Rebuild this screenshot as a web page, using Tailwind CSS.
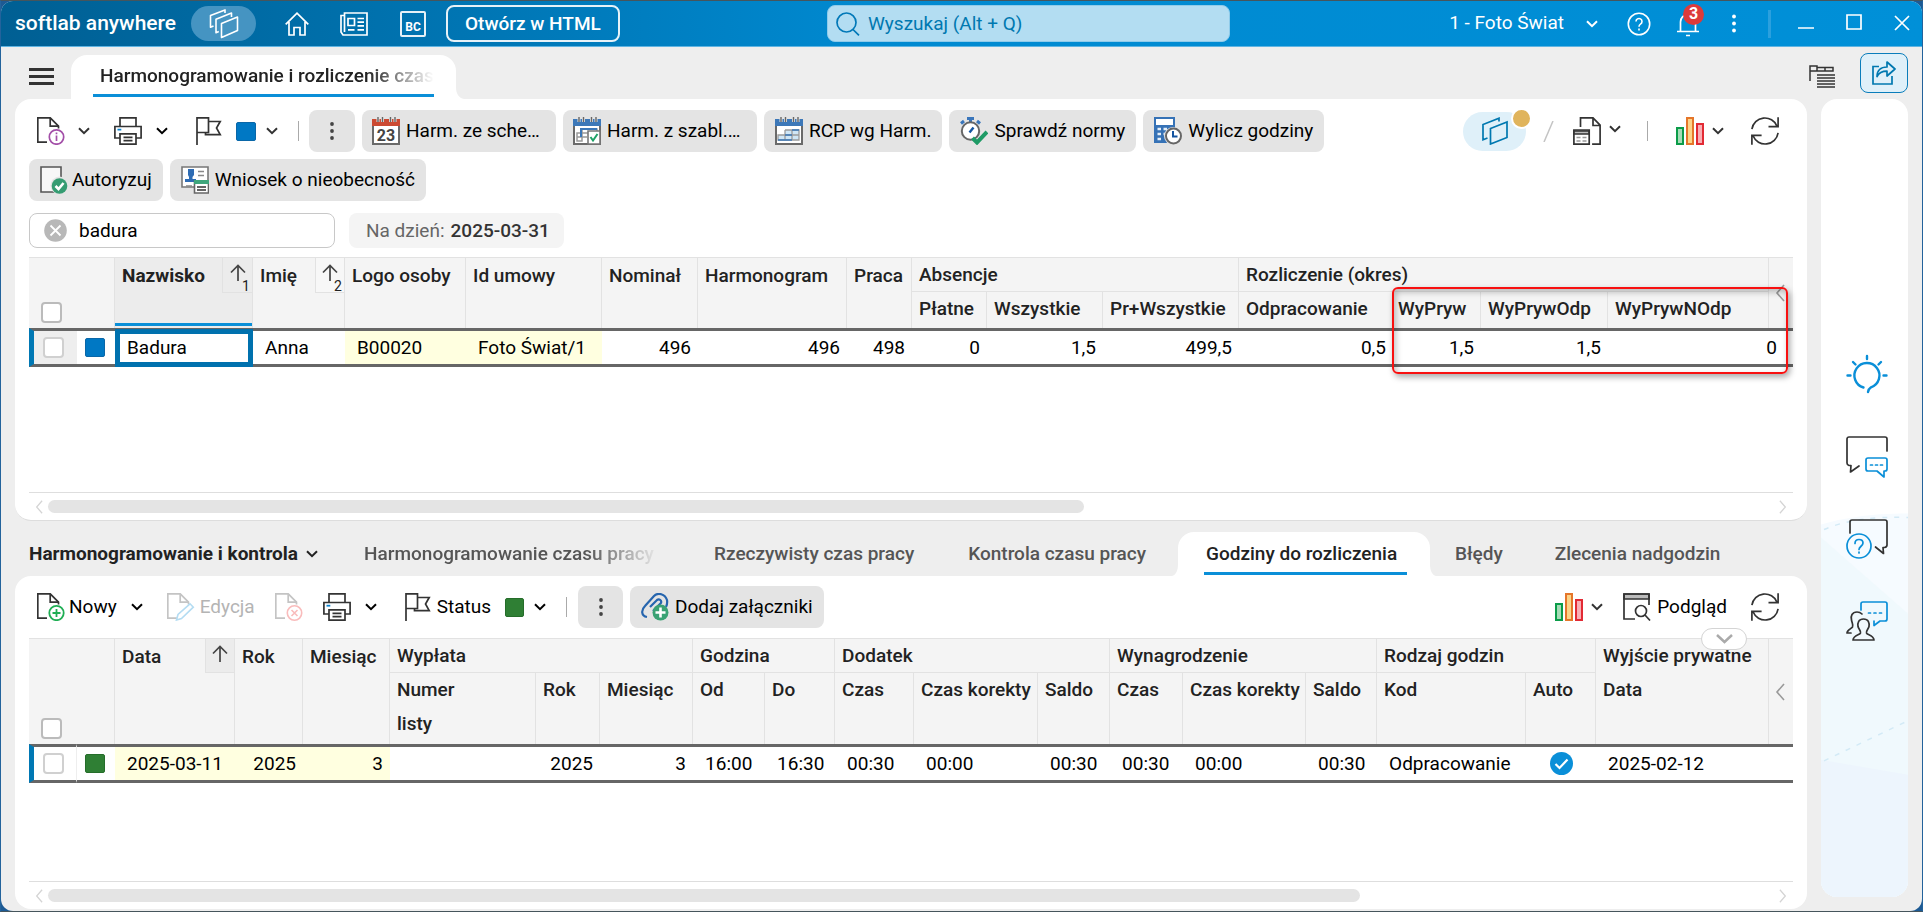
<!DOCTYPE html>
<html lang="pl">
<head>
    <meta charset="UTF-8">
    <meta name="viewport" content="width=device-width, initial-scale=1.0">
    <title>softlab anywhere - Harmonogramowanie</title>
    <script src="https://cdn.jsdelivr.net/npm/@tailwindcss/browser@4"></script>
</head>
<body class="bg-[#1d5a94] font-[Roboto,'Liberation_Sans',sans-serif] text-[19px] leading-6 text-black">

    <!-- Ikony -->
    <svg class="hidden">
        <symbol id="chev" viewBox="0 0 12 8"><path d="M1 1.2l5 5 5-5" fill="none" stroke="currentColor" stroke-width="2"/></symbol>
        <symbol id="left" viewBox="0 0 10 18"><path d="M9 1L2 9l7 8" fill="none" stroke="currentColor" stroke-width="1.6"/></symbol>
        <symbol id="right" viewBox="0 0 10 18"><path d="M1 1l7 8-7 8" fill="none" stroke="currentColor" stroke-width="1.6"/></symbol>
        <symbol id="sort" viewBox="0 0 16 18"><path d="M8 17V2M1 8.500L8 1.500l7 7" fill="none" stroke="#444" stroke-width="1.7"/></symbol>
        <symbol id="dots" viewBox="0 0 4 18"><g fill="currentColor"><circle cx="2" cy="2" r="1.900"/><circle cx="2" cy="9" r="1.900"/><circle cx="2" cy="16" r="1.900"/></g></symbol>
        <symbol id="doc" viewBox="0 0 28 28"><g fill="none" stroke="currentColor" stroke-width="1.7"><path d="M10 25.200H.8V.8h12.400l8.300 8.300v2.400"/><path d="M13.200 1v8.100h8.300"/></g></symbol>
        <symbol id="info" viewBox="0 0 28 28"><g fill="none" stroke="#a34fa8" stroke-width="1.7"><circle cx="19.500" cy="20" r="7.200"/><path d="M19.500 18.500v5.500M19.500 15.500v1.800"/></g></symbol>
        <symbol id="plus" viewBox="0 0 28 28"><g fill="none" stroke="#1fae54" stroke-width="1.8"><circle cx="19.500" cy="20" r="7.200"/><path d="M19.500 16v8M15.500 20h8"/></g></symbol>
        <symbol id="cross" viewBox="0 0 28 28"><g fill="none" stroke="#f9bcbc" stroke-width="1.6"><circle cx="19.500" cy="20" r="7.200"/><path d="M16.500 17l6 6M22.500 17l-6 6"/></g></symbol>
        <symbol id="pencil" viewBox="0 0 28 28"><path d="M9.500 27l1.500-5.500L23 10.800l3.300 3.400L14.500 25.500z" fill="#fff" stroke="#b4dcf2" stroke-width="1.6"/></symbol>
        <symbol id="print" viewBox="0 0 28 28"><g fill="none" stroke="#333" stroke-width="1.7"><path d="M6 9V.9h16V9M6 21H.9V9.500h26.200V21H22"/><path d="M6 16.800h16v10.300H6zM9.500 20.300h9M9.500 23.700h9"/></g><path d="M3.500 12.700h3.800" stroke="#0a84d0" stroke-width="1.8"/></symbol>
        <symbol id="flag" viewBox="0 0 26 28"><g fill="none" stroke="#333" stroke-width="1.7"><path d="M1 28V.9h11.500V15.500H1M12.500 4.500H24.200L20.500 11l3.700 6.600H9.500v-2"/></g></symbol>
        <symbol id="bars" viewBox="0 0 28 28"><path d="M1 11h6v16H1z" fill="#a6dcb6" stroke="#0b9c49" stroke-width="2"/><path d="M11 1h6v26h-6z" fill="#fcd488" stroke="#e5762a" stroke-width="2"/><path d="M21 7h6v20h-6z" fill="#f8aeb4" stroke="#e22a34" stroke-width="2"/></symbol>
        <symbol id="refresh" viewBox="0 0 28 28"><g fill="none" stroke="#333" stroke-width="1.7"><path d="M.9 12.200A13.100 13.100 0 0 1 26 9.200M27.100.3v9.300H17.500"/><path d="M27.100 15.800A13.100 13.100 0 0 1 2 18.800M.9 27.700v-9.300h9.700"/></g></symbol>
        <symbol id="calbase" viewBox="0 0 28 28"><path d="M1 9v18h26V9" fill="#fff" stroke="#6a6a6a" stroke-width="2"/><path d="M0 2h28v7H0z" fill="currentColor"/><path d="M6 0v5M10.500 0v5M18.500 0v5M23 0v5" stroke="#e4e4e4" stroke-width="3"/><path d="M6 0v5M10.500 0v5M18.500 0v5M23 0v5" stroke="#666" stroke-width="1.400"/></symbol>
    </svg>

    <div class="flex min-h-screen flex-col border border-[#23639c] border-t-[#46555c] border-b-[#46555c]">
    <div class="flex flex-1 flex-col overflow-hidden rounded-xl bg-[#eeeeee]">

        <!-- Pasek aplikacji -->
        <header class="flex h-[46px] items-center border-b border-[#5fb4e2] bg-linear-to-r from-[#005f93] via-[#0089d0] via-45% to-[#0090d8] pl-3.5 pr-3 text-white">
            <div class="w-44 pb-0.5 text-[21px] font-medium">softlab anywhere</div>
            <button aria-label="Moduły" class="flex h-[35px] w-[65px] items-center justify-center rounded-full bg-[#4594c2]">
                <svg class="h-[30px] w-[30px]" viewBox="0 0 30 30" fill="none" stroke="#fff" stroke-width="1.600" stroke-linejoin="round"><path d="M12.500 14.500L28.500 8v13.500L12.500 28.500z"/><path d="M9.800 22.500L7 23.700V10.300L22.500 4v4"/><path d="M4.500 17L1.500 18.200V6.500L16 .9v3"/></svg>
            </button>
            <button aria-label="Start" class="ml-[29px]"><svg class="h-6 w-6" viewBox="0 0 24 24" fill="none" stroke="#fff" stroke-width="1.700"><path d="M.7 12.300L12 1.200l11.300 11.100M4 10v13h5v-7.500h6V23h5V10"/></svg></button>
            <button aria-label="Aktualności" class="ml-[31px]"><svg class="h-6 w-7" viewBox="0 0 28 24" fill="none" stroke="#fff" stroke-width="1.700"><path d="M4.500 3.500H1V20l2 3h24V1H4.500v19"/><path d="M8 6.500h6.500v7H8zM17.500 6.500h6.500M17.500 10.200h6.500M17.500 13.900h6.500M8 17.800h6.500M17.500 17.800h6.500"/></svg></button>
            <button aria-label="BC" class="ml-8 flex h-[26px] w-[26px] items-end justify-center rounded-xs border-2 border-white/90 text-[12px] leading-4 font-bold">BC</button>
            <button class="ml-5 h-[37px] rounded-lg border-2 border-white/90 px-[17px] font-medium">Otwórz w HTML</button>
            <div class="flex-1"></div>
            <label class="mr-3 flex h-[37px] w-[403px] items-center rounded-lg border border-[#8fcbea] bg-[#b3ddf2] pl-2">
                <svg class="h-6 w-6 shrink-0" viewBox="0 0 24 24" fill="none" stroke="#0078b8" stroke-width="1.700"><circle cx="10.500" cy="10.500" r="9.500"/><path d="M17 17.500l6 5.800"/></svg>
                <input type="text" aria-label="Wyszukaj" placeholder="Wyszukaj (Alt + Q)" class="ml-2 w-full outline-none placeholder:text-[#0078b0]">
            </label>
            <div class="flex-1"></div>
            <button class="flex items-center gap-[22px] pb-0.5">1 - Foto Świat <svg class="mt-0.5 h-2 w-3"><use href="#chev"/></svg></button>
            <button aria-label="Pomoc" class="ml-[29px]"><svg class="h-6 w-6" viewBox="0 0 24 24" fill="none" stroke="#fff" stroke-width="1.600"><circle cx="12" cy="12" r="10.700"/><path d="M9 9.500a3 3 0 1 1 4.500 2.600c-1.100.7-1.500 1.200-1.500 2.600M12 16.500v2"/></svg></button>
            <button aria-label="Powiadomienia" class="relative ml-[25px]">
                <svg class="h-7 w-6" viewBox="0 0 24 28" fill="none" stroke="#fff" stroke-width="1.700"><path d="M1 21.500h22M4.500 21V12a7.500 7.500 0 0 1 15 0v9M10 25.500h4"/></svg>
                <span class="absolute -top-1.5 left-[7px] flex h-[21px] w-[21px] items-center justify-center rounded-full bg-[#dc3b3b] text-[16px] font-bold">3</span>
            </button>
            <button aria-label="Więcej" class="ml-8"><svg class="h-[19px] w-1"><use href="#dots"/></svg></button>
            <div class="ml-8 h-7 w-[3px] bg-[#2ba0de]"></div>
            <button aria-label="Minimalizuj" class="ml-[27px]"><svg class="h-4 w-4" viewBox="0 0 16 16"><path d="M0 12h16" stroke="#fff" stroke-width="1.700"/></svg></button>
            <button aria-label="Maksymalizuj" class="mb-1 ml-8"><svg class="h-4 w-4" viewBox="0 0 16 16"><path d="M1 1h14v14H1z" fill="none" stroke="#fff" stroke-width="1.700"/></svg></button>
            <button aria-label="Zamknij" class="mb-0.5 ml-8"><svg class="h-4 w-4" viewBox="0 0 16 16"><path d="M1 1l14 14M15 1L1 15" stroke="#fff" stroke-width="1.700"/></svg></button>
        </header>

        <!-- Zakładki główne -->
        <div class="flex h-[52px] shrink-0 items-end pr-3.5 pl-7">
            <button aria-label="Menu" class="mb-[14px] h-[17px] w-[25px] border-y-[3px] border-[#333] py-1"><span class="block h-[3px] bg-[#333]"></span></button>
            <div class="relative ml-[17px] h-11 w-[385px] rounded-t-2xl bg-white px-[22px]">
                <a href="#" class="block h-[42px] border-b-[3px] border-[#0a8fd8] pl-[7px] leading-[41px] font-medium whitespace-nowrap text-[#222]"><span class="block h-[39px] mask-r-from-80%">Harmonogramowanie i rozliczenie czas</span></a>
                <svg class="absolute bottom-0 left-full h-3 w-2" viewBox="0 0 8 12"><path d="M0 0c0 7 3 11 8 12H0z" fill="#fff"/></svg>
            </div>
            <div class="flex-1"></div>
            <button aria-label="Widok" class="mr-[25px] mb-[11px]"><svg class="h-[23px] w-[26px]" viewBox="0 0 26 23" fill="none" stroke="#333" stroke-width="1.500"><path d="M1 16V1h7v5H1M8 2.500h16v3.500H8M16 2.500v3.500M8 10h18M8 13h18M8 16h18M8 19h18M8 22h18"/></svg></button>
            <button aria-label="Udostępnij" class="mb-1.5 flex h-10 w-12 items-center justify-center rounded-lg border border-[#0a7dbb] bg-[#dff0f9]"><svg class="h-6 w-6" viewBox="0 0 24 24" fill="none" stroke="#0078b0" stroke-width="1.700"><path d="M7 5.500H1V23h19v-8"/><path d="M5 15.500C5 9.500 8.500 6 15 6V1l8 7-8 7v-4.800c-5 0-8 1.300-10 5.300z" stroke-linejoin="round"/></svg></button>
        </div>

        <div class="flex flex-1 gap-3.5 pr-3.5 pb-0.5 pl-3.5">
            <main class="flex min-w-0 flex-1 flex-col">

                <!-- Panel górny -->
                <section class="flex h-[422px] shrink-0 flex-col rounded-2xl border-b border-[#dddddd] bg-white px-3.5 pt-[11px]">
                    <div class="flex h-[42px] items-center pl-2 pr-3.5">
                        <button aria-label="Szczegóły" class="flex items-center gap-[13px] text-[#333]"><svg class="h-7 w-7"><use href="#doc"/><use href="#info"/></svg><svg class="h-2 w-3"><use href="#chev"/></svg></button>
                        <button aria-label="Drukuj" class="ml-6 flex items-center gap-3.5"><svg class="h-7 w-7"><use href="#print"/></svg><svg class="h-2 w-3"><use href="#chev"/></svg></button>
                        <button aria-label="Status" class="ml-7 flex items-center text-[#333]"><svg class="h-7 w-[26px]"><use href="#flag"/></svg><span class="mr-2.5 ml-3.5 h-[19px] w-5 rounded-xs border border-[#0a67a8] bg-[#0078c4]"></span><svg class="h-2 w-3"><use href="#chev"/></svg></button>
                        <div class="ml-5 h-5 w-px bg-[#aaa]"></div>
                        <div class="ml-2.5 flex gap-[7px] whitespace-nowrap">
                            <button aria-label="Więcej" class="flex h-[42px] w-[46px] items-center justify-center rounded-lg bg-[#e4e4e4] text-[#444]"><svg class="h-[18px] w-1"><use href="#dots"/></svg></button>
                            <button class="flex h-[42px] w-[194px] items-center gap-1.5 rounded-lg bg-[#e4e4e4] px-2.5">
                                <svg class="h-7 w-7 shrink-0 text-[#cb4a32]" viewBox="0 0 28 28"><use href="#calbase"/><text x="14" y="24" text-anchor="middle" font-size="16" font-weight="700" fill="#444">23</text></svg>Harm. ze sche…</button>
                            <button class="flex h-[42px] w-[194px] items-center gap-1.5 rounded-lg bg-[#e4e4e4] px-2.5">
                                <svg class="h-7 w-7 shrink-0 text-[#3d78b8]" viewBox="0 0 28 28"><use href="#calbase"/><path d="M4 16h5v8H4zM9 12h15v4H9zM4 20h10" fill="none" stroke="#999" stroke-width="1.500"/><path d="M8 20v-8h16" fill="none" stroke="#3d78b8" stroke-width="2"/><path d="M15 14h12v13H15z" fill="#fff" stroke="#777" stroke-width="1.600"/><path d="M17.500 20l2.500 3.500 4.500-6.500" fill="none" stroke="#1fa267" stroke-width="2"/></svg>Harm. z szabl.…</button>
                            <button class="flex h-[42px] items-center gap-1.5 rounded-lg bg-[#e4e4e4] px-[11px]">
                                <svg class="h-7 w-7 shrink-0 text-[#3d78b8]" viewBox="0 0 28 28"><use href="#calbase"/><path d="M10 13h14v10H3v-5h7z" fill="#cfe6f6"/><path d="M10 13h14v10H3v-5h21M10 13v10M17 13v10" fill="none" stroke="#9a9a9a" stroke-width="1.300"/><path d="M10 18h7M3 23h14M17 13h7" stroke="#3d78b8" stroke-width="1.600"/></svg>RCP wg Harm.</button>
                            <button class="flex h-[42px] items-center gap-1.5 rounded-lg bg-[#e4e4e4] px-[11px]">
                                <svg class="h-7 w-7 shrink-0" viewBox="0 0 28 28"><path d="M7 1.500h7M10.500 1v4M1 6.500l3-2.500M20 6.500l-3-2.500" stroke="#3a76bb" stroke-width="3"/><circle cx="10.500" cy="14" r="8.700" fill="#fff" stroke="#666" stroke-width="2"/><path d="M9.500 15.500l4-5" stroke="#1454a0" stroke-width="2.400"/><path d="M12.500 21l4.500 4.500L27 15" fill="none" stroke="#1f9b66" stroke-width="4"/></svg>Sprawdź normy</button>
                            <button class="flex h-[42px] items-center gap-1.5 rounded-lg bg-[#e4e4e4] px-[11px]">
                                <svg class="h-7 w-7 shrink-0" viewBox="0 0 28 28"><path d="M0 0h21v26H0z" fill="#3672b6"/><path d="M2 2h17v6H2z" fill="#fff"/><path d="M3.500 12h3.500M9.500 12h3.500M3.500 17h3.500M3.500 22h3.500M9.500 17h3" stroke="#e4eef8" stroke-width="2.500"/><circle cx="19" cy="19" r="9" fill="#e4e4e4"/><circle cx="19.500" cy="19" r="7.500" fill="#fff" stroke="#666" stroke-width="2"/><path d="M19 14v5.500h4.500" fill="none" stroke="#1454a0" stroke-width="2"/></svg>Wylicz godziny</button>
                        </div>
                        <div class="flex-1"></div>
                        <button aria-label="Okna" class="relative flex h-[39px] w-[63px] items-center justify-center rounded-full bg-[#dff0f9]">
                            <svg class="h-7 w-[26px]" viewBox="0 0 26 28" fill="none" stroke="#0078b0" stroke-width="1.700"><path d="M8.500 11.500L25 5v15.500L8.500 27z"/><path d="M5.500 21L1 22.800V7.500L17 1.200V4.500"/></svg>
                            <span class="absolute -top-1 -right-1.5 h-[21px] w-[21px] rounded-full border-2 border-white bg-[#e0b45c]"></span>
                        </button>
                        <svg class="ml-[17px] h-[21px] w-[11px]" viewBox="0 0 11 21"><path d="M1 21L10 0" stroke="#c4c4c4" stroke-width="1.500"/></svg>
                        <button aria-label="Raport" class="ml-[19px] flex items-center gap-2 text-[#333]"><svg class="h-7 w-7" viewBox="0 0 28 28" fill="none" stroke="#333" stroke-width="1.700"><path d="M7.500 10V.9h12.500l7.100 7.200v19h-8M20 1v7.500h7"/><path d="M.9 13h15.300v14.100H.9z"/><path d="M1 14h15v3H1z" fill="#bbb"/><path d="M3.500 20.500h4M9.500 20.500h4M3.500 24h4M9.500 24h4" stroke="#999"/></svg><svg class="mb-1 h-2 w-3"><use href="#chev"/></svg></button>
                        <div class="ml-[26px] h-5 w-px bg-[#aaa]"></div>
                        <button aria-label="Wykresy" class="ml-7 flex items-center gap-2 text-[#333]"><svg class="h-7 w-7"><use href="#bars"/></svg><svg class="h-2 w-3"><use href="#chev"/></svg></button>
                        <button aria-label="Odśwież" class="ml-[27px]"><svg class="h-7 w-7"><use href="#refresh"/></svg></button>
                    </div>
                    <div class="mt-[7px] flex gap-[7px]">
                        <button class="flex h-[42px] items-center gap-1 rounded-lg bg-[#e4e4e4] px-[11px]">
                            <svg class="h-7 w-7" viewBox="0 0 28 28"><path d="M1 1h20v25H1z" fill="#f7f7f7" stroke="#555" stroke-width="1.600"/><circle cx="19.500" cy="19.500" r="9" fill="#e4e4e4"/><circle cx="19.500" cy="20" r="7.800" fill="#359c72"/><path d="M15.500 20l3 3 5-6" fill="none" stroke="#fff" stroke-width="2.600"/></svg>Autoryzuj</button>
                        <button class="flex h-[42px] items-center gap-1.5 rounded-lg bg-[#e4e4e4] px-[11px]">
                            <svg class="h-7 w-7" viewBox="0 0 28 28"><path d="M1 1h26v20H1z" fill="#fff" stroke="#777" stroke-width="1.600"/><path d="M7 3h6v6l-1.500 2v2H15v3H4v-3h4v-2L7 9z" fill="#2f6cb4"/><path d="M17 5.500h6M17 9.500h6M5 20h6" stroke="#888" stroke-width="1.500"/><path d="M13.500 15h14v12h-14z" fill="#fff" stroke="#666" stroke-width="1.600"/><path d="M13 14h15v4H13z" fill="#3fa67c"/><path d="M16 21h9M16 24h9" stroke="#333" stroke-width="1.500"/></svg>Wniosek o nieobecność</button>
                    </div>
                    <div class="mt-3 flex gap-3.5">
                        <label class="flex h-[35px] w-[306px] items-center rounded-lg border border-[#c8c8c8] pl-3.5">
                            <svg class="h-[23px] w-[23px] shrink-0" viewBox="0 0 23 23"><circle cx="11.500" cy="11.500" r="11.300" fill="#b8b8b8"/><path d="M6.500 6.500l10 10M16.500 6.500l-10 10" stroke="#fff" stroke-width="1.800"/></svg>
                            <input type="text" aria-label="Filtr" value="badura" class="ml-3 w-full outline-none">
                        </label>
                        <div class="flex h-[35px] items-center gap-1.5 rounded-lg bg-[#f4f4f4] pr-3.5 pl-[17px] text-[#666]">Na dzień: <span class="font-medium text-[#333]">2025-03-31</span></div>
                    </div>

                    <div class="relative mt-[9px] flex-1 border-b border-[#dedede]">
                        <table class="w-full table-fixed border-separate border-spacing-0 leading-[34px] whitespace-nowrap">
                            <colgroup><col class="w-12"><col class="w-[38px]"><col class="w-[138px]"><col class="w-[92px]"><col class="w-[121px]"><col class="w-[136px]"><col class="w-24"><col class="w-[149px]"><col class="w-[65px]"><col class="w-[75px]"><col class="w-[116px]"><col class="w-[136px]"><col class="w-[154px]"><col class="w-[88px]"><col class="w-[127px]"><col><col class="w-6"></colgroup>
                            <thead class="bg-[#f4f4f4] text-left align-top text-[#222] [&_th]:border-r [&_th]:border-[#e2e2e2] [&_th]:pl-[7px] [&_th]:align-top [&_th]:font-medium">
                                <tr class="h-[35px] leading-[35px] [&_th]:border-t">
                                    <th colspan="2" rowspan="2"><input type="checkbox" aria-label="Zaznacz wszystkie" class="mt-11 ml-[5px] block h-[21px] w-[21px] appearance-none rounded-sm border-2 border-[#bbb] bg-white"></th>
                                    <th rowspan="2" class="relative bg-[#ececec]"><span class="font-bold">Nazwisko</span><span class="absolute inset-x-0 bottom-0.5 h-[3px] bg-[#0a8fd8]"></span><span class="absolute top-0 right-0 flex h-[35px] w-[30px] border-b border-l border-[#e2e2e2] pt-1.5 pl-[7px]"><svg class="h-[18px] w-4 shrink-0"><use href="#sort"/></svg><sub class="mt-3 -ml-1 text-[14px] leading-3 font-normal">1</sub></span></th>
                                    <th rowspan="2" class="relative">Imię<span class="absolute top-0 right-0 flex h-[35px] w-[29px] border-b border-l border-[#e2e2e2] bg-[#f7f7f7] pt-1.5 pl-1.5"><svg class="h-[18px] w-4 shrink-0"><use href="#sort"/></svg><sub class="mt-3 -ml-1 text-[14px] leading-3 font-normal">2</sub></span></th>
                                    <th rowspan="2">Logo osoby</th>
                                    <th rowspan="2">Id umowy</th>
                                    <th rowspan="2">Nominał</th>
                                    <th rowspan="2">Harmonogram</th>
                                    <th rowspan="2">Praca</th>
                                    <th colspan="3" class="border-b leading-[33px]">Absencje</th>
                                    <th colspan="4" class="border-b leading-[33px]">Rozliczenie (okres)</th>
                                    <th rowspan="2" class="relative border-r-0!"><svg class="absolute top-[26px] left-1.5 h-[18px] w-2.5 text-[#999]"><use href="#left"/></svg></th>
                                </tr>
                                <tr class="h-9"><th>Płatne</th><th>Wszystkie</th><th>Pr+Wszystkie</th><th>Odpracowanie</th><th class="pl-[5px]!">WyPryw</th><th>WyPrywOdp</th><th>WyPrywNOdp</th></tr>
                            </thead>
                            <tbody>
                                <tr class="h-[39px] [&_td]:border-y-3 [&_td]:border-[#666] [&_td]:px-[7px] [&_td]:leading-[33px]">
                                    <td class="border-l-[5px] border-l-[#0078b4]! bg-[#eeeeee]"><input type="checkbox" aria-label="Zaznacz wiersz" class="ml-0.5 block h-[21px] w-[21px] appearance-none rounded-sm border-2 border-[#d0d0d0] bg-white"></td>
                                    <td class="pl-2!"><span class="block h-[19px] w-5 rounded-xs border border-[#0a67a8] bg-[#0078c4]"></span></td>
                                    <td class="relative pl-3!">Badura<span class="absolute inset-x-0 -top-0.5 -bottom-[3px] border-5 border-[#0071ae]"></span></td>
                                    <td class="pl-3!">Anna</td>
                                    <td class="bg-[#ffffe0] pl-3!">B00020</td>
                                    <td class="bg-[#ffffe0] pl-3!">Foto Świat/1</td>
                                    <td class="text-right">496</td>
                                    <td class="text-right">496</td>
                                    <td class="text-right">498</td>
                                    <td class="text-right">0</td>
                                    <td class="text-right">1,5</td>
                                    <td class="text-right">499,5</td>
                                    <td class="text-right">0,5</td>
                                    <td class="text-right">1,5</td>
                                    <td class="text-right">1,5</td>
                                    <td colspan="2" class="pr-4! text-right">0</td>
                                </tr>
                            </tbody>
                        </table>
                        <!-- wyróżnienie kolumn wyjść prywatnych -->
                        <div class="absolute top-[30px] right-[5px] h-[87px] w-[396px] rounded-md border-2 border-[#f81010] shadow-[2px_3px_6px_rgba(0,0,0,0.35),inset_2px_3px_6px_rgba(0,0,0,0.25)]"></div>
                    </div>
                    <div class="flex h-[27px] items-center px-1.5 text-[#d4d4d4]">
                        <svg class="h-3.5 w-2"><use href="#left"/></svg>
                        <div class="mx-[5px] flex-1"><div class="h-[13px] w-[60%] rounded-full bg-[#e4e4e4]"></div></div>
                        <svg class="h-3.5 w-2"><use href="#right"/></svg>
                    </div>
                </section>

                <!-- Zakładki szczegółów -->
                <nav class="mt-[11px] flex h-11 shrink-0 items-center pl-3.5 font-medium whitespace-nowrap text-[#555]">
                    <button class="flex items-center gap-2 font-bold text-[#222]">Harmonogramowanie i kontrola <svg class="h-2 w-3"><use href="#chev"/></svg></button>
                    <a href="#" class="ml-[46px] w-[296px] overflow-hidden mask-r-from-75%">Harmonogramowanie czasu pracy</a>
                    <a href="#" class="ml-[54px]">Rzeczywisty czas pracy</a>
                    <a href="#" class="ml-[54px]">Kontrola czasu pracy</a>
                    <div class="relative ml-8 h-full w-[252px] rounded-t-2xl bg-white pl-[26px]">
                        <svg class="absolute right-full bottom-0 h-3 w-1.5" viewBox="0 0 8 12" preserveAspectRatio="none"><path d="M8 0c0 7-3 11-8 12h8z" fill="#fff"/></svg>
                        <a href="#" class="block h-[43px] w-[203px] border-b-[3px] border-[#0a8fd8] pl-0.5 leading-[44px] text-[#222]">Godziny do rozliczenia</a>
                        <svg class="absolute bottom-0 left-full h-3 w-1.5" viewBox="0 0 8 12" preserveAspectRatio="none"><path d="M0 0c0 7 3 11 8 12H0z" fill="#fff"/></svg>
                    </div>
                    <a href="#" class="ml-[25px]">Błędy</a>
                    <a href="#" class="ml-[52px]">Zlecenia nadgodzin</a>
                </nav>

                <!-- Panel dolny -->
                <section class="flex flex-1 flex-col rounded-2xl bg-white px-3.5 pt-2.5">
                    <div class="relative flex h-[42px] items-center pl-2 pr-3.5">
                        <button class="flex items-center"><svg class="mr-1 h-7 w-7 text-[#333]"><use href="#doc"/><use href="#plus"/></svg>Nowy<svg class="ml-3.5 h-2 w-3"><use href="#chev"/></svg></button>
                        <button disabled class="ml-6 flex items-center text-[#b4b4b4]"><svg class="mr-[5px] h-7 w-7 text-[#c4c4c4]"><use href="#doc"/><use href="#pencil"/></svg>Edycja</button>
                        <button disabled aria-label="Usuń" class="ml-5 text-[#c4c4c4]"><svg class="h-7 w-7"><use href="#doc"/><use href="#cross"/></svg></button>
                        <button aria-label="Drukuj" class="ml-5 flex items-center gap-3.5"><svg class="h-7 w-7"><use href="#print"/></svg><svg class="h-2 w-3"><use href="#chev"/></svg></button>
                        <button class="ml-7 flex items-center"><svg class="mr-1.5 h-7 w-[26px]"><use href="#flag"/></svg>Status<span class="mr-2.5 ml-3.5 h-[19px] w-[19px] rounded-xs border border-[#256d2a] bg-[#2f7f34]"></span><svg class="h-2 w-3"><use href="#chev"/></svg></button>
                        <div class="ml-5 h-5 w-px bg-[#aaa]"></div>
                        <button aria-label="Więcej" class="ml-[11px] flex h-[42px] w-[45px] items-center justify-center rounded-lg bg-[#e4e4e4] text-[#444]"><svg class="h-[18px] w-1"><use href="#dots"/></svg></button>
                        <button class="ml-[7px] flex h-[42px] items-center gap-1.5 rounded-lg bg-[#e4e4e4] px-[11px]">
                            <svg class="h-7 w-7" viewBox="0 0 28 28"><path d="M6 24c-6-1-6-7-2-11L13 3c4-4 11-2 13 4 .5 3 0 5-1 7M9 14l7-7c2-1.500 5 0 4 3l-8 8" fill="none" stroke="#2665ae" stroke-width="2.200"/><circle cx="19.500" cy="19.500" r="8" fill="#3aa274"/><path d="M19.500 14.500v10M14.500 19.500h10" stroke="#fff" stroke-width="2.600"/></svg>Dodaj załączniki</button>
                        <div class="flex-1"></div>
                        <button aria-label="Wykresy" class="flex items-center gap-2 text-[#333]"><svg class="h-7 w-7"><use href="#bars"/></svg><svg class="h-2 w-3"><use href="#chev"/></svg></button>
                        <button class="ml-5 flex items-center gap-1.5"><svg class="h-7 w-7" viewBox="0 0 28 28" fill="none" stroke="#333" stroke-width="1.700"><path d="M1 1h25v5H1z" fill="#bbb"/><path d="M12 26H1V1h25v11"/><circle cx="18" cy="18" r="5.500"/><path d="M22 22l5 5.500"/></svg>Podgląd</button>
                        <button aria-label="Odśwież" class="ml-6"><svg class="h-7 w-7"><use href="#refresh"/></svg></button>
                        <button aria-label="Zwiń" class="absolute top-[42px] right-[46px] z-10 flex h-[22px] w-[46px] items-center justify-center rounded-full border border-[#d4d4d4] bg-white text-[#aaa]"><svg class="h-2.5 w-[17px]" viewBox="0 0 17 10"><path d="M1 1l7.500 7L16 1" fill="none" stroke="currentColor" stroke-width="2.500"/></svg></button>
                    </div>

                    <div class="mt-2.5 flex-1 border-b border-[#dedede]">
                        <table class="w-full table-fixed border-separate border-spacing-0 leading-[34px] whitespace-nowrap">
                            <colgroup><col class="w-12"><col class="w-[38px]"><col class="w-[120px]"><col class="w-[68px]"><col class="w-[87px]"><col class="w-[146px]"><col class="w-16"><col class="w-[93px]"><col class="w-[72px]"><col class="w-[70px]"><col class="w-[79px]"><col class="w-[124px]"><col class="w-[72px]"><col class="w-[73px]"><col class="w-[123px]"><col class="w-[71px]"><col class="w-[149px]"><col class="w-[70px]"><col><col class="w-6"></colgroup>
                            <thead class="bg-[#f4f4f4] text-left text-[#222] [&_th]:border-r [&_th]:border-[#e2e2e2] [&_th]:pl-[7px] [&_th]:align-top [&_th]:font-medium">
                                <tr class="h-[35px] leading-[35px] [&_th]:border-t">
                                    <th colspan="2" rowspan="2"><input type="checkbox" aria-label="Zaznacz wszystkie" class="mt-[79px] ml-[5px] block h-[21px] w-[21px] appearance-none rounded-sm border-2 border-[#bbb] bg-white"></th>
                                    <th rowspan="2" class="relative">Data<span class="absolute top-0 right-0 flex h-[34px] w-[29px] border-b border-l border-[#e2e2e2] bg-[#ececec] pt-1.5 pl-1.5"><svg class="h-[18px] w-4"><use href="#sort"/></svg></span></th>
                                    <th rowspan="2">Rok</th>
                                    <th rowspan="2">Miesiąc</th>
                                    <th colspan="3" class="border-b leading-[33px]">Wypłata</th>
                                    <th colspan="2" class="border-b leading-[33px]">Godzina</th>
                                    <th colspan="3" class="border-b leading-[33px]">Dodatek</th>
                                    <th colspan="3" class="border-b leading-[33px]">Wynagrodzenie</th>
                                    <th colspan="2" class="border-b leading-[33px]">Rodzaj godzin</th>
                                    <th class="leading-[34px]">Wyjście prywatne</th>
                                    <th rowspan="2" class="relative border-r-0!"><svg class="absolute top-[44px] left-1.5 h-[18px] w-2.5 text-[#999]"><use href="#left"/></svg></th>
                                </tr>
                                <tr class="h-[71px]"><th>Numer<br>listy</th><th>Rok</th><th>Miesiąc</th><th>Od</th><th>Do</th><th>Czas</th><th>Czas korekty</th><th>Saldo</th><th>Czas</th><th>Czas korekty</th><th>Saldo</th><th>Kod</th><th>Auto</th><th>Data</th></tr>
                            </thead>
                            <tbody>
                                <tr class="h-[39px] [&_td]:border-y-3 [&_td]:border-[#666] [&_td]:px-[7px] [&_td]:leading-[33px]">
                                    <td class="border-r border-l-[5px] border-r-[#eee]! border-l-[#0078b4]!"><input type="checkbox" aria-label="Zaznacz wiersz" class="ml-0.5 block h-[21px] w-[21px] appearance-none rounded-sm border-2 border-[#d0d0d0] bg-white"></td>
                                    <td class="pl-2!"><span class="block h-[19px] w-5 rounded-xs border border-[#256d2a] bg-[#2f7f34]"></span></td>
                                    <td class="bg-[#ffffe0] pl-3!">2025-03-11</td>
                                    <td class="bg-[#ffffe0] text-right">2025</td>
                                    <td class="bg-[#ffffe0] text-right">3</td>
                                    <td></td>
                                    <td class="text-right">2025</td>
                                    <td class="text-right">3</td>
                                    <td class="pl-3!">16:00</td>
                                    <td class="pl-3!">16:30</td>
                                    <td class="pl-3!">00:30</td>
                                    <td class="pl-3!">00:00</td>
                                    <td class="pl-3!">00:30</td>
                                    <td class="pl-3!">00:30</td>
                                    <td class="pl-3!">00:00</td>
                                    <td class="pl-3!">00:30</td>
                                    <td class="pl-3!">Odpracowanie</td>
                                    <td><svg class="mx-auto h-[23px] w-[23px]" viewBox="0 0 23 23"><circle cx="11.500" cy="11.500" r="11.500" fill="#0a8fd8"/><path d="M5.500 12l4 4 8-8.500" fill="none" stroke="#fff" stroke-width="2.200"/></svg></td>
                                    <td colspan="2" class="pl-3!">2025-02-12</td>
                                </tr>
                            </tbody>
                        </table>
                    </div>
                    <div class="flex h-[27px] items-center px-1.5 text-[#d4d4d4]">
                        <svg class="h-3.5 w-2"><use href="#left"/></svg>
                        <div class="mx-[5px] flex-1"><div class="h-[13px] w-[76%] rounded-full bg-[#e4e4e4]"></div></div>
                        <svg class="h-3.5 w-2"><use href="#right"/></svg>
                    </div>
                </section>
            </main>

            <!-- Pasek boczny -->
            <aside class="relative mb-3 w-[87px] overflow-hidden rounded-2xl bg-white">
                <svg class="absolute inset-0 h-full w-full" viewBox="0 0 87 797" preserveAspectRatio="none">
                    <path d="M0 425Q40 413 87 414V797H0z" fill="#f6fbff"/>
                    <path d="M0 438L87 514V797H0z" fill="#f0f9fd"/>
                    <path d="M0 660L87 675V797H0z" fill="#edf5fd"/>
                    <path d="M3 430Q35 416 87 418M3 661L87 621" fill="none" stroke="#d3eaf6" stroke-width="1.500" stroke-dasharray="5 7"/>
                </svg>
                <div class="relative flex flex-col items-center gap-10 pt-[255px] pl-1">
                    <button aria-label="Podpowiedzi"><svg class="h-[42px] w-[42px]" viewBox="0 0 42 42" fill="none" stroke="#0a8fd8" stroke-width="2.400" stroke-linecap="round"><path d="M17.500 33.500A12.500 12.500 0 1 1 25 33.300Q22.500 35 22 38M21 2v3M7 8l2.500 2.500M35 8l-2.500 2.500M1.500 21.500h3M37.500 21.500h3"/></svg></button>
                    <button aria-label="Komentarze"><svg class="h-[42px] w-[42px]" viewBox="0 0 42 42" fill="none" stroke="#333" stroke-width="1.700" stroke-linecap="round" stroke-linejoin="round"><path d="M41 15V3a2 2 0 0 0-2-2H3a2 2 0 0 0-2 2v24q0 2 2 2.500h2L4.500 36 13 30"/><path d="M22 22h17a2 2 0 0 1 2 2v9a2 2 0 0 1-2 2h-1v6l-7-6h-9a2 2 0 0 1-2-2v-9a2 2 0 0 1 2-2z" stroke="#0a8fd8"/><path d="M24.500 29h2M29.500 29h2M34.500 29h2" stroke="#0a8fd8"/></svg></button>
                    <button aria-label="Pytania"><svg class="h-[42px] w-[42px]" viewBox="0 0 42 42" fill="none" stroke="#333" stroke-width="1.700" stroke-linecap="round" stroke-linejoin="round"><path d="M4 15V4a2 2 0 0 1 2-2h33a2 2 0 0 1 2 2v23q0 2-2.500 2.500H37l.5 6-8-6.500"/><circle cx="13" cy="28" r="12" stroke="#0a8fd8"/><path d="M9 25.500q0-4 4-4t4 3.500c0 3-4 3.500-4 6.500M13 34v1" stroke="#0a8fd8"/></svg></button>
                    <button aria-label="Czat"><svg class="h-[42px] w-[42px]" viewBox="0 0 42 42" fill="none" stroke="#333" stroke-width="1.700" stroke-linecap="round" stroke-linejoin="round"><path d="M15 10V4a2 2 0 0 1 2-2h22a2 2 0 0 1 2 2v15q0 2-2 2h-5l-6 4.500V21" stroke="#0a8fd8"/><path d="M22.500 13h2M28 13h2M33.500 13h2" stroke="#0a8fd8"/><path d="M16 14q-2-2-5-2c-5 0-6.500 4-5.500 8 .5 3 2 5 1 7-1 1.500-5.500 3-5.500 6h4"/><path d="M17.500 19c-5 0-6 4-5.500 7.500.5 2.500 3 4 2.500 6.500-.5 2-7 2-7.500 7h21c-.5-5-7-5-7.500-7-.5-2.500 2-4 2.500-6.500.5-3.500-.5-7.500-5.500-7.500z" fill="#f2f9fd"/></svg></button>
                </div>
            </aside>
        </div>
    </div>
    </div>
</body>
</html>
